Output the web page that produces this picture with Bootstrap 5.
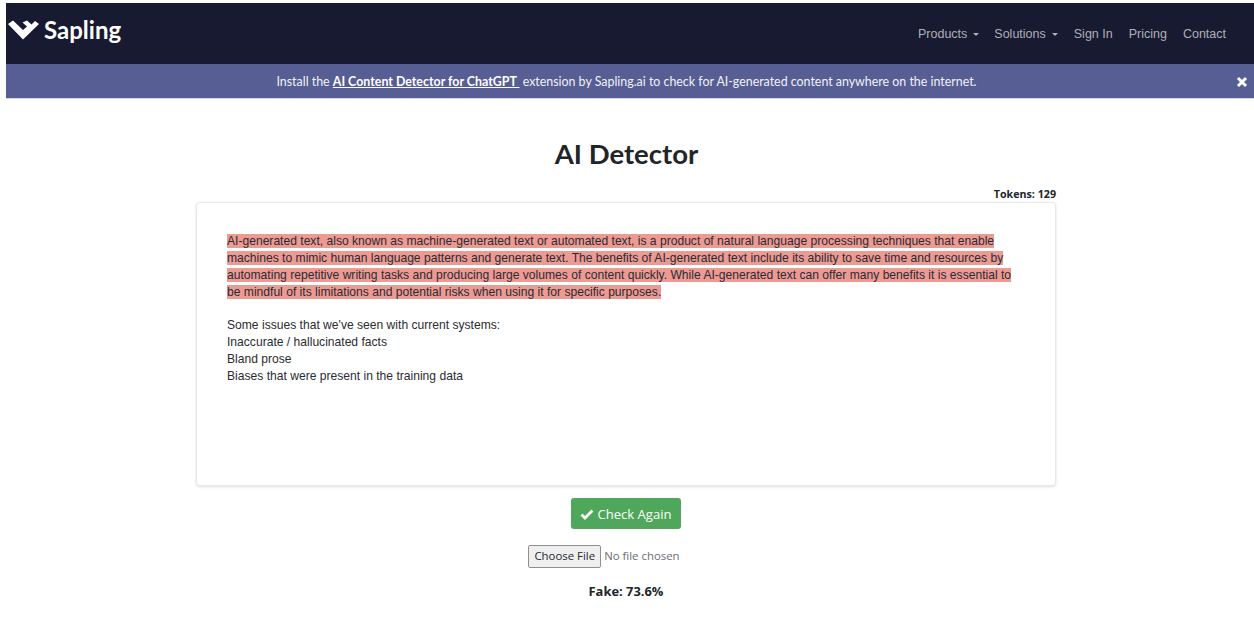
<!DOCTYPE html>
<html lang="en">
<head>
<meta charset="utf-8">
<title>AI Detector</title>
<link href="https://cdn.jsdelivr.net/npm/bootstrap@5.3.0/dist/css/bootstrap.min.css" rel="stylesheet">
<style>
html,body{height:100%;overflow:hidden}
body{background:#fff;font-family:"Open Sans",sans-serif;color:#212529;padding:3px 0 0 6px}
.top-bar{background:#171a30;height:61px;padding:0 20px 0 1px}
.brand-link{font-family:Lato,sans-serif;font-weight:700;font-size:24px;color:#fff;text-decoration:none;line-height:1;gap:5px;margin-top:-8px}
.brand-link:hover{color:#fff}
.menu-link{font-family:"Liberation Sans",sans-serif;font-size:12.5px;color:#aeb0b8;text-decoration:none;padding:0 8px;margin-top:2px}
.menu-link:first-child{padding-right:7px}
.caret-mark{display:inline-block;margin-left:6px;vertical-align:2px;border-top:3.5px solid #aeb0b8;border-left:3.5px solid transparent;border-right:3.5px solid transparent}
.promo-bar{background:#565e93;height:35px;border-bottom:1px solid #d4d6e4;color:#f1f2f7;font-family:Lato,sans-serif;font-size:12.4px;padding-right:7px;padding-top:2px}
.promo-text a{color:#fff;font-weight:700}
.promo-close{position:absolute;right:6px;top:50%;margin-top:-5px;width:12px;height:12px;padding:0;border:0;background:none;display:block}
.page-title{font-family:Lato,sans-serif;font-weight:700;font-size:27.5px;color:#212529;line-height:36px;margin:37px 0 0;padding-right:7px}
.editor-wrap{width:860px;margin-left:190px}
.token-count{font-family:"Open Sans",sans-serif;font-weight:700;font-size:10.7px;line-height:16px;margin-top:14px;height:16px;color:#212529}
.editor-box{height:284px;border:1px solid #e8e8e8;border-radius:4px;box-shadow:0 1px 3px rgba(0,0,0,.12);padding:30px 30px 0;font-family:"Liberation Sans",sans-serif;font-size:12.1px;line-height:17px;color:#2b2b33}
.flagged-text{background:#ed9a93}
.action-btn{background:#4ea75a;color:#fff;font-size:13.1px;line-height:20px;padding:5px 9px;border:0;border-radius:3px;height:31px;margin-top:12px;margin-right:8px}
.action-btn svg{vertical-align:-1px;margin-right:3px}
.file-row{margin-top:15px;margin-right:52px;font-size:11.4px;height:24px;color:#6b6d70}
.file-btn{font-size:11.4px;color:#26282b;background:#efefef;border:1px solid #8f8f8f;border-radius:2px;height:23px;line-height:20px;padding:0 5px;margin-right:3px}
.score-line{font-weight:700;font-size:12.9px;margin-top:13px;line-height:20px;color:#212529;padding-right:8px}
</style>
</head>
<body>
<nav class="top-bar d-flex align-items-center justify-content-between">
  <a class="brand-link d-flex align-items-center" href="#">
    <svg width="32" height="20" viewBox="0 0 32 20"><path d="M1 4 L6 .5 L16 10 L20 6.500 L15.500 2.500 L20 .5 L24.500 4.500 L28 1 L32 4 L16 19.500 Z" fill="#fff"/></svg>
    <span>Sapling</span>
  </a>
  <div class="d-flex align-items-center">
    <a class="menu-link" href="#">Products<span class="caret-mark"></span></a>
    <a class="menu-link" href="#">Solutions<span class="caret-mark"></span></a>
    <a class="menu-link" href="#">Sign In</a>
    <a class="menu-link" href="#">Pricing</a>
    <a class="menu-link" href="#">Contact</a>
  </div>
</nav>
<div class="promo-bar position-relative d-flex align-items-center justify-content-center">
  <div class="promo-text">Install the <a href="#">AI Content Detector for ChatGPT&nbsp;</a> extension by Sapling.ai to check for AI-generated content anywhere on the internet.</div>
  <button class="promo-close" aria-label="Close"><svg width="12" height="12" viewBox="0 0 12 12" class="d-block"><path d="M2 2 L10 10 M10 2 L2 10" stroke="#fff" stroke-width="3"/></svg></button>
</div>
<main class="d-flex flex-column">
  <h1 class="page-title text-center">AI Detector</h1>
  <div class="editor-wrap">
    <div class="token-count text-end">Tokens: 129</div>
    <div class="editor-box bg-white">
      <div><span class="flagged-text">AI-generated text, also known as machine-generated text or automated text, is a product of natural language processing techniques that enable machines to mimic human language patterns and generate text. The benefits of AI-generated text include its ability to save time and resources by automating repetitive writing tasks and producing large volumes of content quickly. While AI-generated text can offer many benefits it is essential to be mindful of its limitations and potential risks when using it for specific purposes.</span></div>
      <div class="mt-3 pt-0">Some issues that we've seen with current systems:</div>
      <div>Inaccurate / hallucinated facts</div>
      <div>Bland prose</div>
      <div>Biases that were present in the training data</div>
    </div>
  </div>
  <div class="text-center"><button class="action-btn"><svg width="14" height="11" viewBox="0 0 14 11"><path d="M1.500 5.500 L5 9 L12.500 1.500" fill="none" stroke="#fff" stroke-width="2.800"/></svg>Check Again</button></div>
  <div class="file-row d-flex align-items-center justify-content-center"><button class="file-btn">Choose File</button><span>No file chosen</span></div>
  <div class="score-line text-center">Fake: 73.6%</div>
</main>
</body>
</html>
